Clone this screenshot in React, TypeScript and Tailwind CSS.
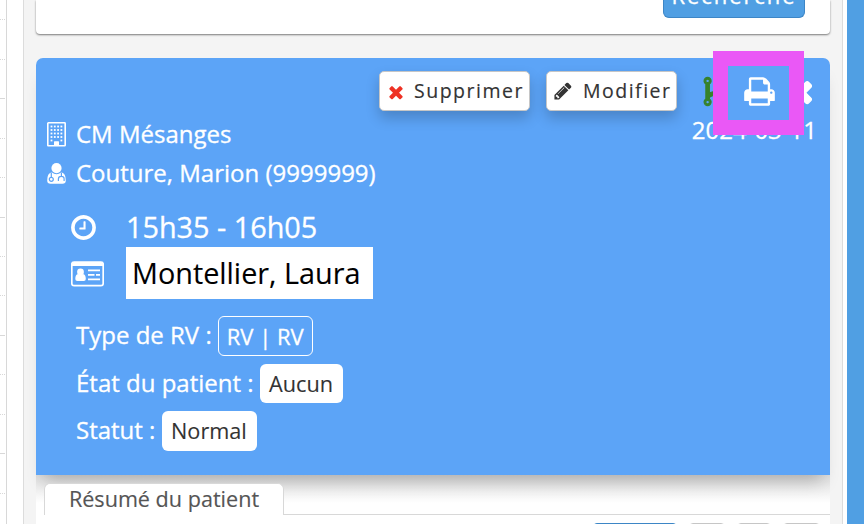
import type { ReactNode } from "react";

interface IconProps {
  className?: string;
}

const PRINT =
  "M448 1536h896v-256h-896v256zm0-640h896v-384h-160q-40 0-68-28t-28-68v-160h-640v640zm1152 64q0-26-19-45t-45-19-45 19-19 45 19 45 45 19 45-19 19-45zm128 0v416q0 13-9.5 22.5t-22.5 9.5h-224v160q0 40-28 68t-68 28h-960q-40 0-68-28t-28-68v-160h-224q-13 0-22.5-9.5t-9.5-22.5v-416q0-79 56.5-135.5t135.5-56.5h64v-544q0-40 28-68t68-28h672q40 0 88 20t76 48l152 152q28 28 48 76t20 88v256h64q79 0 135.5 56.5t56.5 135.5z";
const CLOCK =
  "M1024 544v448q0 14-9 23t-23 9h-320q-14 0-23-9t-9-23v-64q0-14 9-23t23-9h224v-352q0-14 9-23t23-9h64q14 0 23 9t9 23zm416 352q0-148-73-273t-198-198-273-73-273 73-198 198-73 273 73 273 198 198 273 73 273-73 198-198 73-273zm224 0q0 209-103 385.5t-279.5 279.5-385.5 103-385.5-103-279.5-279.5-103-385.5 103-385.5 279.5-279.5 385.5-103 385.5 103 279.5 279.5 103 385.5z";
const TIMES =
  "M1490 1322q0 40-28 68l-136 136q-28 28-68 28t-68-28l-294-294-294 294q-28 28-68 28t-68-28l-136-136q-28-28-28-68t28-68l294-294-294-294q-28-28-28-68t28-68l136-136q28-28 68-28t68 28l294 294 294-294q28-28 68-28t68 28l136 136q28 28 28 68t-28 68l-294 294 294 294q28 28 28 68z";
const PENCIL =
  "M491 1536l91-91-235-235-91 91v107h128v128h107zm523-928q0-22-22-22-10 0-17 7l-542 542q-7 7-7 17 0 22 22 22 10 0 17-7l542-542q7-7 7-17zm-54-192l416 416-832 832h-416v-416zm683 96q0 53-37 90l-166 166-416-416 166-165q36-38 90-38 53 0 91 38l235 234q37 39 37 91z";
const FORK =
  "M672 1472q0-40-28-68t-68-28-68 28-28 68 28 68 68 28 68-28 28-68zm0-1152q0-40-28-68t-68-28-68 28-28 68 28 68 68 28 68-28 28-68zm640 128q0-40-28-68t-68-28-68 28-28 68 28 68 68 28 68-28 28-68zm96 0q0 52-26 96.5t-70 69.5q-2 287-226 414-67 38-203 81-128 40-169.5 71t-41.5 100v26q44 25 70 69.5t26 96.5q0 80-56 136t-136 56-136-56-56-136q0-52 26-96.5t70-69.5v-820q-44-25-70-69.5t-26-96.5q0-80 56-136t136-56 136 56 56 136q0 52-26 96.5t-70 69.5v497q54-26 154-57 55-17 87.5-29.5t70.5-31 59-39.5 40.5-51 28-69.5 8.5-91.5q-44-25-70-69.5t-26-96.5q0-80 56-136t136-56 136 56 56 136z";

function Glyph({ d, className }: IconProps & { d: string }) {
  return (
    <svg viewBox="0 0 1792 1792" fill="currentColor" className={className}>
      <path d={d} />
    </svg>
  );
}

function BuildingIcon({ className }: IconProps) {
  const rows = [4.5, 8, 11.5, 15];
  const cols = [4.5, 7.8, 11.1, 14.4];
  return (
    <svg viewBox="0 0 19 25" className={className}>
      <rect x="0.8" y="0.8" width="17.4" height="23" rx="0.6" fill="none" stroke="currentColor" strokeWidth="1.6" />
      <g fill="currentColor">
        {rows.map((y) => cols.map((x) => <rect key={`${x}-${y}`} x={x - 0.9} y={y - 0.9} width="1.8" height="1.8" />))}
        <rect x="3.6" y="17.6" width="1.8" height="1.8" />
        <rect x="13.5" y="17.6" width="1.8" height="1.8" />
        <path d="M7 24v-4.3q0-.5.5-.5h4q.5 0 .5.5V24z" />
      </g>
    </svg>
  );
}

function DoctorIcon({ className }: IconProps) {
  return (
    <svg viewBox="0 0 19 21" className={className}>
      <circle cx="9.5" cy="5.1" r="5.1" fill="currentColor" />
      <path
        d="M4.6 9.3Q7 11.3 9.5 11.3T14.4 9.3Q18.8 10.3 18.8 17.5Q18.8 20.8 15.5 20.8H3.5Q.2 20.8 .2 17.5Q.2 10.3 4.6 9.3Z"
        fill="currentColor"
      />
      <g fill="none" stroke="#5ca4f7" strokeWidth="1.2">
        <path d="M4.3 9.5V14.2" />
        <circle cx="4.3" cy="16.3" r="2" />
        <path d="M14.4 9.5V13M11.4 18V16Q11.4 13.3 14.3 13.3T17.1 16V18" />
      </g>
    </svg>
  );
}

function IdCardIcon({ className }: IconProps) {
  return (
    <svg viewBox="0 0 33 26" className={className}>
      <rect x="0.8" y="1" width="31.4" height="23.6" rx="2.2" fill="none" stroke="currentColor" strokeWidth="1.7" />
      <g fill="currentColor">
        <path d="M1 5V3q0-2 2-2h27q2 0 2 2v2z" />
        <circle cx="9.5" cy="11" r="3.4" />
        <path d="M7 13q2.500 2 5 0 2.800.7 2.800 5 0 2-2 2H6.300q-2 0-2-2 0-4.300 2.700-5z" />
        <path d="M17 8.500h12v1.700H17zM17 13h6.500v1.700H17zM25 13h4v1.700h-4zM17 17.500h12v1.700H17z" />
      </g>
    </svg>
  );
}

function ActionButton({ icon, children, className }: IconProps & { icon: ReactNode; children: ReactNode }) {
  return (
    <button
      className={`flex h-10 items-center rounded-[5px] border border-[#c6c6c6] bg-white text-[19.5px] tracking-[1.5px] text-[#333] shadow-[0_7px_14px_rgba(0,0,0,0.2)] [-webkit-text-stroke:0.15px] ${className}`}
    >
      {icon}
      <span className="whitespace-nowrap">{children}</span>
    </button>
  );
}

// One hour of the calendar: two dotted subdivisions, then a solid rule
function HourSlot() {
  return (
    <div className="flex h-[118.3px] shrink-0 flex-col">
      <div className="flex-1 border-b border-dotted border-[#d8d8d8]" />
      <div className="flex-1 border-b border-dotted border-[#d8d8d8]" />
      <div className="flex-1 border-b border-[#d8d8d8]" />
    </div>
  );
}

export default function App() {
  return (
    <div className="flex h-[524px] w-[864px] overflow-hidden bg-white font-['Open_Sans','Noto_Sans',sans-serif] text-2xl leading-none text-white">
      {/* Calendar edge */}
      <aside className="h-full w-[7px] shrink-0 border-r border-[#d8d8d8] pr-px">
        <div className="-mt-[19px] flex flex-col">
          <HourSlot />
          <HourSlot />
          <HourSlot />
          <HourSlot />
          <HourSlot />
        </div>
      </aside>

      <main className="ml-4 flex h-full w-[820px] shrink-0 flex-col border-x border-[#dcdcdc] bg-[#f4f4f4] pr-3 pl-3">
        {/* Search form */}
        <section className="flex h-[34px] w-[794px] shrink-0 justify-end rounded-b bg-white pr-[25px] shadow-[0_1px_2px_rgba(0,0,0,0.5)]">
          <button className="flex h-[18px] w-[142px] items-end justify-center rounded-b-md border border-t-0 border-[#3d86c6] bg-[#509fe3]">
            <span className="mb-[11px] text-[22px] leading-[22px] tracking-[1.9px] [-webkit-text-stroke:0.3px]">Recherche</span>
          </button>
        </section>

        {/* Appointment */}
        <section className="relative mt-6 h-[417px] w-[794px] shrink-0 rounded-t-[7px] bg-[#5ca4f7] shadow-[0_14px_16px_-8px_rgba(0,0,0,0.22)] [-webkit-text-stroke:0.3px]">
          <div className="flex h-[53px] pt-[13px] pl-[343px]">
            <ActionButton className="w-[151px] pl-[6px]" icon={<Glyph d={TIMES} className="mt-px mr-[8px] size-[20px] text-[#ee3124]" />}>
              Supprimer
            </ActionButton>
            <ActionButton className="ml-4 w-[131px] pl-[6px]" icon={<Glyph d={PENCIL} className="mr-[10px] size-[20px]" />}>
              Modifier
            </ActionButton>
            <Glyph d={FORK} className="mt-1 ml-[20px] size-[33px] stroke-[#37822b] stroke-[60] text-[#37822b]" />
            <Glyph d={TIMES} className="mt-[4px] ml-[54px] size-[33px] stroke-white stroke-[70]" />
          </div>

          <div className="mt-[5px] flex items-center">
            <BuildingIcon className="mt-[6px] ml-[11px] h-[25px] w-[19px]" />
            <span className="mt-[5px] ml-[10px]">CM Mésanges</span>
            <time className="-mt-[3px] mr-[13px] ml-auto">2024-03-11</time>
          </div>
          <div className="mt-[14px] flex items-center">
            <DoctorIcon className="ml-[11px] h-[21px] w-[19px]" />
            <span className="ml-[10px]">Couture, Marion (9999999)</span>
          </div>

          <div className="mt-[21px] flex h-[41px] items-center pt-px text-[28.8px]">
            <Glyph d={CLOCK} className="ml-[33px] size-[29px]" />
            <span className="ml-[28px]">15h35 - 16h05</span>
          </div>
          <div className="flex h-[52px] items-center text-[28.8px]">
            <IdCardIcon className="mt-px ml-[35px] h-[26px] w-[33px]" />
            <div className="ml-[22px] flex h-full w-[247px] items-center bg-white pl-[6px] text-black [-webkit-text-stroke:0.1px]">
              <span className="whitespace-nowrap">Montellier, Laura</span>
            </div>
          </div>

          <div className="mt-[17px] ml-10 flex flex-col gap-2">
            <div className="flex h-10 items-center">
              <span className="mb-[2px]">Type de RV :</span>
              <span className="ml-[6px] flex h-10 w-[95px] items-center justify-center rounded-md border border-white pb-px text-[22px]">
                RV | RV
              </span>
            </div>
            <div className="flex h-[39px] items-center">
              <span className="mb-[2px]">État du patient :</span>
              <span className="ml-[6px] flex h-[39px] w-[83px] items-center justify-center rounded-md bg-white text-[21.7px] text-[#333] [-webkit-text-stroke:0.1px]">
                Aucun
              </span>
            </div>
            <div className="flex h-10 items-center">
              <span className="mb-[2px]">Statut :</span>
              <span className="ml-[7px] flex h-10 w-[95px] items-center justify-center rounded-md bg-white pr-[2px] text-[21.7px] text-[#333] [-webkit-text-stroke:0.1px]">
                Normal
              </span>
            </div>
          </div>

          {/* Highlight around the print button */}
          <div className="absolute top-[-7px] left-[677px] flex h-[84px] w-[91px] items-center justify-center border-[15px] border-[#ea58f6] bg-[#5ca4f7]">
            <Glyph d={PRINT} className="-mt-[3px] ml-[2px] size-[33px] shrink-0" />
          </div>
        </section>

        {/* Patient file */}
        <section className="flex h-[49px] w-[794px] shrink-0 flex-col">
          <div className="flex h-10 shrink-0 items-end bg-linear-to-b from-[#dedede] to-white to-70%">
            <div className="z-10 mt-2 ml-2 flex h-8 w-60 items-center justify-center rounded-t-md border border-b-0 border-[#d8d8d8] bg-white pb-px text-[21.6px] text-[#555] [-webkit-text-stroke:0.15px]">
              Résumé du patient
            </div>
            <div className="h-px flex-1 bg-[#d8d8d8]" />
          </div>
          <div className="flex h-5 shrink-0 gap-3 bg-white pt-2 pl-[557px]">
            <div className="h-5 w-[84px] rounded border border-[#3d86c6] bg-[#509fe3]" />
            <div className="h-5 w-9 rounded border border-[#c6c6c6]" />
            <div className="h-5 w-[34px] rounded border border-[#c6c6c6]" />
            <div className="h-5 w-[37px] rounded border border-[#c6c6c6]" />
          </div>
        </section>
      </main>

      <div className="ml-1 h-full flex-1 bg-[#509fe3]" />
    </div>
  );
}
